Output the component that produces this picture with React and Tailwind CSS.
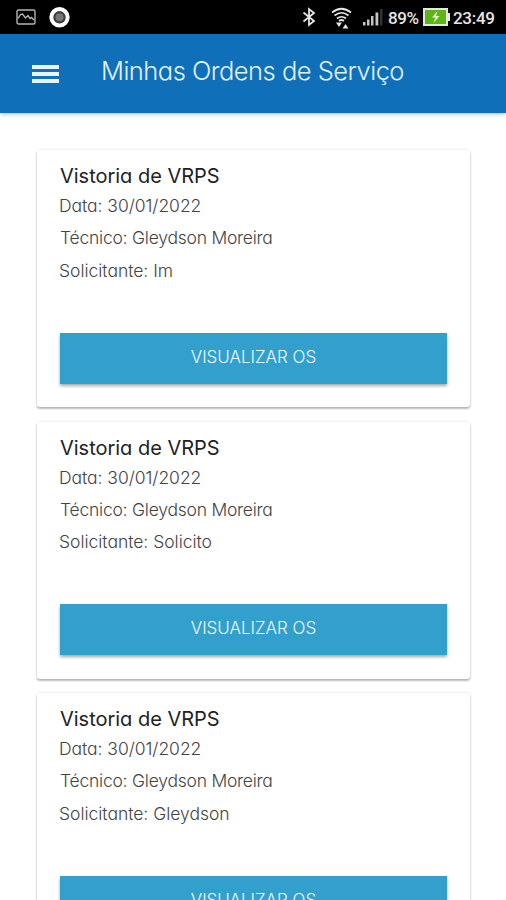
import React from 'react';

const ORDERS = [
    { id: 1, title: 'Vistoria de VRPS', date: '30/01/2022', technician: 'Gleydson Moreira', requester: 'Im' },
    { id: 2, title: 'Vistoria de VRPS', date: '30/01/2022', technician: 'Gleydson Moreira', requester: 'Solicito' },
    { id: 3, title: 'Vistoria de VRPS', date: '30/01/2022', technician: 'Gleydson Moreira', requester: 'Gleydson' },
];

function StatusBar() {
    return (
        <div className="flex h-[34px] shrink-0 items-center justify-between bg-black pl-4 pr-[11px] text-[#e6e6e6]">
            <div className="flex items-center gap-3">
                <svg className="h-4 w-5" viewBox="0 0 20 16" fill="none" stroke="#b5b5b5" strokeWidth="1.4">
                    <rect x="1" y="1" width="18" height="14" rx="1.5" />
                    <path d="M2 9.500 L4.500 5.500 L6.500 5 L9.500 9 L12 6.500 L14 9.500 L15.500 8.500 L18 11" />
                </svg>
                <svg className="h-[22px] w-[22px]" viewBox="0 0 22 22">
                    <circle cx="11.500" cy="11.300" r="8.2" fill="#3c3c3c" stroke="#fff" strokeWidth="4" />
                    <circle cx="11.500" cy="11.300" r="4" fill="#777" />
                </svg>
            </div>
            <div className="flex items-center">
                <svg className="mr-[15px] h-5 w-3.5" viewBox="0 0 14 20" fill="none" stroke="currentColor" strokeWidth="1.8">
                    <path d="M1.500 5.500 L12 14 L7 18 V2 L12 6 L1.500 14.500" />
                </svg>
                <svg className="mr-[11px] mt-px h-[22px] w-[21px]" viewBox="0 0 21 22" fill="none" stroke="currentColor" strokeWidth="1.7">
                    <path d="M1 5.500 Q10.500 -2 20 5.500" />
                    <path d="M3.500 8.500 Q10.500 3 17.500 8.500" />
                    <path d="M6 11.500 Q10.500 8 15 11.500" />
                    <path d="M8 14 Q10.500 12 13 14" />
                    <path d="M5 15.500 h6 l-3 4.500z M11.500 21.500 h6 l-3 -4.500z" fill="currentColor" stroke="none" />
                </svg>
                <svg className="mr-[5px] h-[18px] w-5" viewBox="0 0 20 18" fill="#c4c4c4">
                    <rect x="0" y="14" width="2.500" height="3.500" />
                    <rect x="4" y="11.500" width="2.500" height="6" />
                    <rect x="8" y="8" width="2.500" height="9.500" />
                    <rect x="12.500" y="4.500" width="2.800" height="13" />
                    <rect x="17" y="1" width="2.500" height="16.500" fill="#333" />
                </svg>
                <span className="mt-0.5 w-[31px] whitespace-nowrap font-['Roboto',sans-serif] text-[17px] leading-5 font-medium tracking-[-0.4px]">89%</span>
                <svg className="ml-1 h-[18px] w-[27px]" viewBox="0 0 27 18">
                    <rect x="1" y="1" width="23" height="16" fill="#5cb615" stroke="#e6e6e6" strokeWidth="2" />
                    <rect x="24.500" y="5" width="2.500" height="8" fill="#e6e6e6" />
                    <path d="M14.500 3 L9 9.500 h3.500 L10.500 15 L16.500 8 h-3.500z" fill="#e5f5cf" />
                </svg>
                <span className="ml-[3px] mt-0.5 w-[42px] whitespace-nowrap font-['Roboto',sans-serif] text-[17px] leading-5 font-medium tracking-[-0.3px]">23:49</span>
            </div>
        </div>
    );
}

function Header() {
    return (
        <header className="z-10 flex h-[79px] shrink-0 items-start bg-[#0f70b9] pl-8 shadow-[0_1px_4px_rgba(0,0,0,0.3)]">
            <button className="mt-[31px] flex w-[27px] flex-col gap-[3px]" aria-label="Menu">
                <span className="h-[4px] w-full bg-[#e8f2fb]"></span>
                <span className="h-[4px] w-full bg-[#e8f2fb]"></span>
                <span className="h-[4px] w-full bg-[#e8f2fb]"></span>
            </button>
            <h1 className="ml-[42px] mt-[21px] whitespace-nowrap text-[25.5px] leading-8 font-light tracking-[-0.52px] text-[#e3f2ff]">
                Minhas Ordens de Serviço
            </h1>
        </header>
    );
}

function OrderCard({ order }) {
    return (
        <div className="h-[257px] shrink-0 rounded-[3px] bg-white px-[23px] pt-3 shadow-[0_2px_2px_rgba(0,0,0,0.25),0_0_3px_rgba(0,0,0,0.14)]">
            <h2 className="whitespace-nowrap text-[20px] leading-7 font-normal tracking-[-0.02px] text-[#222]">{order.title}</h2>
            <div className="whitespace-nowrap text-[17.5px] leading-[32.3px] font-light text-[#444]">
                <p className="-ml-px tracking-[-0.04px]">Data: {order.date}</p>
                <p className="tracking-[-0.23px]">Técnico: {order.technician}</p>
                <p className="-ml-px tracking-[-0.02px]">Solicitante: {order.requester}</p>
            </div>
            <button className="mt-[46px] flex h-[51px] w-full items-start justify-center bg-[#339fcd] pt-3 text-[17px] leading-6 font-light text-[#eefaff] shadow-[0_2px_3px_rgba(0,0,0,0.35)]">
                VISUALIZAR OS
            </button>
        </div>
    );
}

export default function App() {
    return (
        <div className="flex h-[900px] w-[506px] flex-col overflow-hidden bg-white font-['Inter',sans-serif] [font-feature-settings:'cv11']">
            <StatusBar />
            <Header />
            <main className="flex flex-col gap-[14.5px] pl-[37px] pr-9 pt-[37px]">
                {ORDERS.map((order) => (
                    <OrderCard key={order.id} order={order} />
                ))}
            </main>
        </div>
    );
}
